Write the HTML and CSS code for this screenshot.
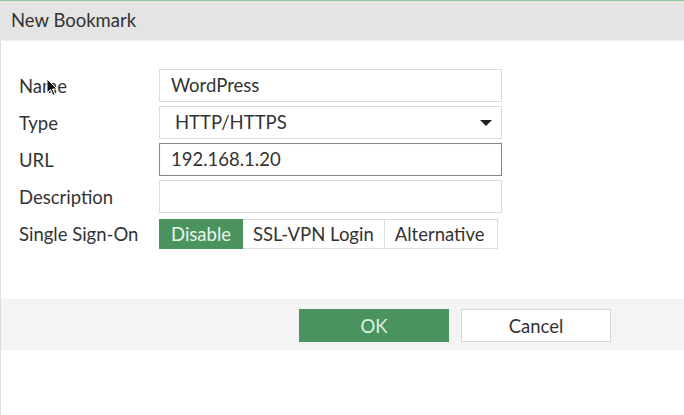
FILE: index.html
```html
<!DOCTYPE html>
<html lang="en">
<head>
    <meta charset="UTF-8">
    <meta name="viewport" content="width=device-width, initial-scale=1.0">
    <title>New Bookmark</title>
    <link rel="stylesheet" href="styles.css">
</head>
<body>
    <div class="dialog">
        <div class="title">New Bookmark</div>
        <div class="content">
            <div class="form">
                <div class="row">
                    <label class="label">Name</label>
                    <div class="input">WordPress</div>
                </div>
                <div class="row">
                    <label class="label">Type</label>
                    <div class="input select">HTTP/HTTPS<span class="caret"></span></div>
                </div>
                <div class="row">
                    <label class="label">URL</label>
                    <div class="input focused">192.168.1.20</div>
                </div>
                <div class="row">
                    <label class="label">Description</label>
                    <div class="input"></div>
                </div>
                <div class="row">
                    <label class="label">Single Sign-On</label>
                    <div class="toggle">
                        <span class="opt active">Disable</span>
                        <span class="opt">SSL-VPN Login</span>
                        <span class="opt last">Alternative</span>
                    </div>
                </div>
            </div>
            <div class="footer">
                <button class="btn primary">OK</button>
                <button class="btn">Cancel</button>
            </div>
        </div>
    </div>
    <svg class="cursor" width="12" height="19" viewBox="0 0 12 19">
        <path d="M1 1 L1 15 L4.5 11.5 L7 17.5 L9 16.6 L6.6 11 L11 11 Z" fill="#111" stroke="#fff" stroke-width="1"/>
    </svg>
</body>
</html>
```

FILE: styles.css
```css
body {
    margin: 0;
    font-family: Lato, "Open Sans", sans-serif;
    font-size: 18.5px;
    color: #333;
    background: #fff;
}
.dialog {
    width: 684px;
    height: 415px;
    border-top: 1px solid #8fc6a0;
    box-sizing: border-box;
    overflow: hidden;
    display: flex;
    flex-direction: column;
}
.title {
    height: 39px;
    line-height: 39px;
    padding-left: 11px;
    background: #e4e4e4;
    border-bottom: 1px solid #eeeeee;
    flex-shrink: 0;
}
.content {
    flex: 1;
    border-left: 1px solid #dddddd;
}
.form {
    padding: 28px 0 49px 0;
    display: flex;
    flex-direction: column;
    gap: 4px;
}
.row {
    display: flex;
    align-items: center;
    height: 33px;
}
.label {
    width: 158px;
    flex-shrink: 0;
    padding-left: 18px;
    box-sizing: border-box;
}
.input {
    width: 343px;
    height: 33px;
    flex-shrink: 0;
    box-sizing: border-box;
    border: 1px solid #dcdcdc;
    padding: 0 11px;
    line-height: 31px;
    position: relative;
}
.select {
    padding-left: 15px;
}
.caret {
    position: absolute;
    right: 9px;
    top: 13px;
    width: 0;
    height: 0;
    border-left: 6px solid transparent;
    border-right: 6px solid transparent;
    border-top: 6px solid #222;
}
.focused {
    border-color: #888;
    box-shadow: inset 0 0 1px rgba(0,0,0,0.2);
}
.toggle {
    display: flex;
    height: 30px;
    margin-top: 1px;
}
.opt {
    border: 1px solid #dcdcdc;
    border-left: none;
    padding: 0 10px;
    line-height: 28px;
}
.opt:first-child {
    border-left: 1px solid #dcdcdc;
    padding: 0 11px;
}
.opt.last {
    padding: 0 12px 0 10px;
}
.opt.active {
    background: #4a935e;
    border-color: #4a935e;
    color: #eaf3ec;
}
.footer {
    background: #f4f4f4;
    height: 51px;
    box-sizing: border-box;
    padding: 10px 0 0 298px;
    display: flex;
    gap: 12px;
    align-items: flex-start;
}
.btn {
    width: 150px;
    height: 33px;
    padding: 0;
    font-family: Lato, "Open Sans", sans-serif;
    font-size: 18.5px;
    color: #333;
    background: #fff;
    border: 1px solid #d8d8d8;
}
.btn.primary {
    background: #4a935e;
    border-color: #4a935e;
    color: #dcefe1;
}
.cursor {
    position: absolute;
    left: 46px;
    top: 78px;
}
```
